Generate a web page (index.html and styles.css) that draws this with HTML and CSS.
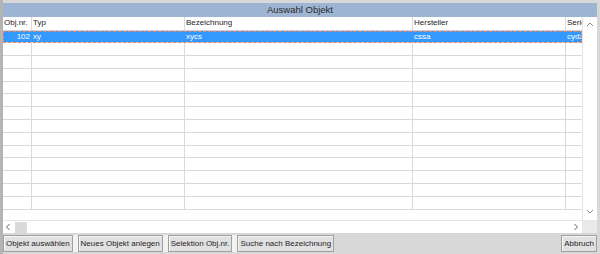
FILE: index.html
```html
<!DOCTYPE html>
<html lang="de">

<head>
    <meta charset="UTF-8">
    <title>Auswahl Objekt</title>
    <link rel="stylesheet" href="styles.css">
</head>

<body>

    <div id="window">
        <div id="title">Auswahl Objekt</div>

        <div id="grid-box">
            <div id="grid-main">
                <div id="grid">
                    <div class="row head">
                        <div class="cell">Obj.nr.</div>
                        <div class="cell">Typ</div>
                        <div class="cell">Bezeichnung</div>
                        <div class="cell">Hersteller</div>
                        <div class="cell">Serie</div>
                    </div>
                    <div class="row active">
                        <div class="cell num">102</div>
                        <div class="cell">xy</div>
                        <div class="cell">xycs</div>
                        <div class="cell">cssa</div>
                        <div class="cell">cydz</div>
                    </div>
                    <div class="row"><div class="cell"></div><div class="cell"></div><div class="cell"></div><div class="cell"></div><div class="cell"></div></div>
                    <div class="row"><div class="cell"></div><div class="cell"></div><div class="cell"></div><div class="cell"></div><div class="cell"></div></div>
                    <div class="row"><div class="cell"></div><div class="cell"></div><div class="cell"></div><div class="cell"></div><div class="cell"></div></div>
                    <div class="row"><div class="cell"></div><div class="cell"></div><div class="cell"></div><div class="cell"></div><div class="cell"></div></div>
                    <div class="row"><div class="cell"></div><div class="cell"></div><div class="cell"></div><div class="cell"></div><div class="cell"></div></div>
                    <div class="row"><div class="cell"></div><div class="cell"></div><div class="cell"></div><div class="cell"></div><div class="cell"></div></div>
                    <div class="row"><div class="cell"></div><div class="cell"></div><div class="cell"></div><div class="cell"></div><div class="cell"></div></div>
                    <div class="row"><div class="cell"></div><div class="cell"></div><div class="cell"></div><div class="cell"></div><div class="cell"></div></div>
                    <div class="row"><div class="cell"></div><div class="cell"></div><div class="cell"></div><div class="cell"></div><div class="cell"></div></div>
                    <div class="row"><div class="cell"></div><div class="cell"></div><div class="cell"></div><div class="cell"></div><div class="cell"></div></div>
                    <div class="row"><div class="cell"></div><div class="cell"></div><div class="cell"></div><div class="cell"></div><div class="cell"></div></div>
                    <div class="row"><div class="cell"></div><div class="cell"></div><div class="cell"></div><div class="cell"></div><div class="cell"></div></div>
                    <div class="row"><div class="cell"></div><div class="cell"></div><div class="cell"></div><div class="cell"></div><div class="cell"></div></div>
                </div>
                <!-- vertikale Scrollbar -->
                <div id="vscroll">
                    <svg width="8" height="6" viewBox="0 0 8 6"><path d="M1 5 L4 2 L7 5" fill="none" stroke="#8a8a8a" stroke-width="1"/></svg>
                    <svg width="8" height="6" viewBox="0 0 8 6"><path d="M1 1 L4 4 L7 1" fill="none" stroke="#8a8a8a" stroke-width="1"/></svg>
                </div>
            </div>
            <!-- horizontale Scrollbar -->
            <div id="hscroll-row">
                <div id="hscroll">
                    <svg class="arrow" width="6" height="8" viewBox="0 0 6 8"><path d="M4.5 1 L1.5 4 L4.5 7" fill="none" stroke="#606060" stroke-width="1"/></svg>
                    <div id="thumb"></div>
                    <span class="spacer"></span>
                    <svg class="arrow" width="6" height="8" viewBox="0 0 6 8"><path d="M1.5 1 L4.5 4 L1.5 7" fill="none" stroke="#606060" stroke-width="1"/></svg>
                </div>
                <div id="corner"></div>
            </div>
        </div>

        <div id="btn-bar">
            <div class="btn-group">
                <button class="btn">Objekt auswählen</button>
                <button class="btn">Neues Objekt anlegen</button>
                <button class="btn">Selektion Obj.nr.</button>
                <button class="btn">Suche nach Bezeichnung</button>
            </div>
            <button class="btn">Abbruch</button>
        </div>
    </div>

</body>

</html>
```

FILE: styles.css
```css
* {
    margin: 0;
    padding: 0;
    box-sizing: border-box;
}

body {
    background: #d8d8d8;
    font-family: "Liberation Sans", Arial, sans-serif;
    font-size: 8px;
    color: #1e1e1e;
}

#window {
    width: 600px;
    height: 254px;
    padding: 3px 3px 0 0;
    border-left: 3px solid #b4b4b4;
    background: #d8d8d8;
    display: flex;
    flex-direction: column;
}

#title {
    height: 14px;
    line-height: 14px;
    background: #9db5d3;
    text-align: center;
    font-size: 9.5px;
    color: #2a2a2a;
}

#grid-box {
    height: 216px;
    background: #fff;
    display: flex;
    flex-direction: column;
}

#grid-main {
    flex: 1;
    display: flex;
    overflow: hidden;
}

#grid {
    flex: 1;
    overflow: hidden;
}

.row {
    display: grid;
    grid-template-columns: 29px 153px 228px 153px 1fr;
    height: 12.8px;
    border-bottom: 1px solid #d9d9d9;
}

.row.head {
    height: 13.5px;
    border-bottom: 1px solid #d0d0d0;
}

.cell {
    border-right: 1px solid #d9d9d9;
    padding: 0 1px;
    line-height: 12px;
    white-space: nowrap;
    overflow: hidden;
}

.cell:last-child {
    border-right: none;
}

.cell.num {
    text-align: right;
}

.row.active {
    background: #3399ff;
    color: #fff;
    outline: 1px dashed #e8826a;
    outline-offset: -1px;
}

.row.active .cell {
    border-right-color: #3399ff;
}

#vscroll {
    width: 15px;
    border-left: 1px solid #e4e4e4;
    display: flex;
    flex-direction: column;
    justify-content: space-between;
    align-items: center;
    padding: 4px 0 5px;
}

#hscroll-row {
    height: 13px;
    display: flex;
}

#hscroll {
    flex: 1;
    display: flex;
    align-items: center;
    border-top: 1px solid #e4e4e4;
    padding: 0 3px 0 2px;
}

#hscroll .arrow {
    flex: none;
}

#thumb {
    width: 12px;
    height: 11px;
    background: #dadada;
    margin-left: 4px;
}

.spacer {
    flex: 1;
}

#corner {
    width: 15px;
    background: #e9e9e9;
}

#btn-bar {
    flex: 1;
    display: flex;
    justify-content: space-between;
    align-items: flex-start;
    padding-top: 2px;
}

.btn-group {
    display: flex;
    gap: 5px;
    background: #f2f2f2;
}

.btn {
    height: 17px;
    padding: 0 2px;
    font-family: "Liberation Sans", Arial, sans-serif;
    font-size: 8px;
    color: #1e1e1e;
    background: #e1e1e1;
    border: 1px solid #a0a0a0;
    box-shadow: inset 1px 1px 0 #f4f4f4;
}
```
